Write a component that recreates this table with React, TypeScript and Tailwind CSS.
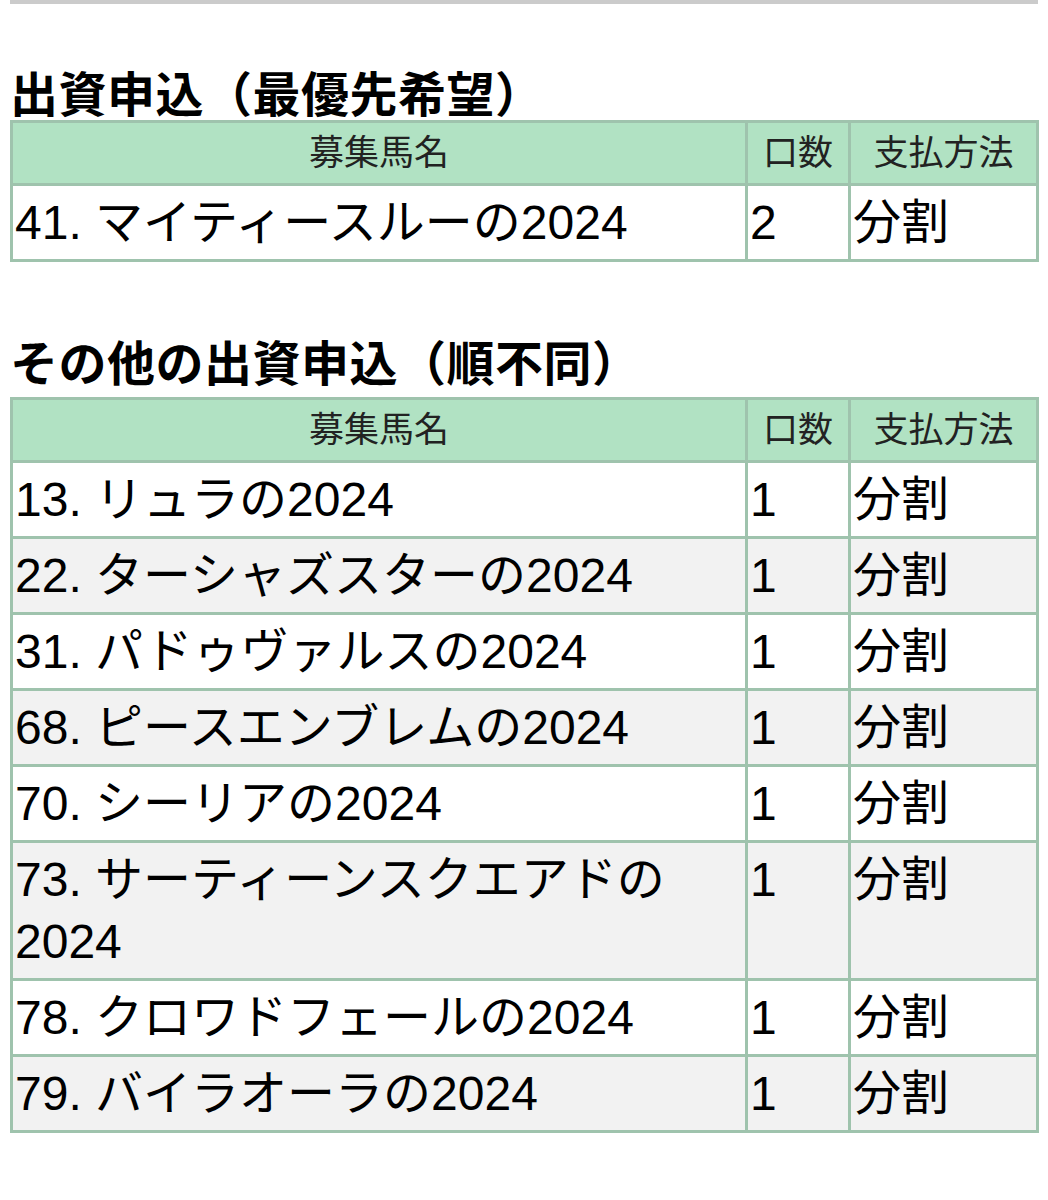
const first = [{ name: "41. マイティースルーの2024", qty: "2", pay: "分割" }];

const others = [
  { name: "13. リュラの2024", qty: "1", pay: "分割" },
  { name: "22. ターシャズスターの2024", qty: "1", pay: "分割" },
  { name: "31. パドゥヴァルスの2024", qty: "1", pay: "分割" },
  { name: "68. ピースエンブレムの2024", qty: "1", pay: "分割" },
  { name: "70. シーリアの2024", qty: "1", pay: "分割" },
  { name: "73. サーティーンスクエアドの2024", qty: "1", pay: "分割" },
  { name: "78. クロワドフェールの2024", qty: "1", pay: "分割" },
  { name: "79. バイラオーラの2024", qty: "1", pay: "分割" },
];

type Row = { name: string; qty: string; pay: string };

const th = "border-[3px] border-[#9fc3ad] bg-[#b1e2c3] text-center font-normal text-[35px] leading-[52px] py-[4px] text-[#222]";
const td = "border-[3px] border-[#9fc3ad] align-top text-[48px] leading-[62px] pt-[6px] pb-[5px] pl-[2px] pr-[4px] text-black";

function EntryTable({ rows }: { rows: Row[] }) {
  return (
    <table className="w-[1026px] table-fixed border-collapse">
      <colgroup>
        <col className="w-[735px]" />
        <col className="w-[103px]" />
        <col className="w-[188px]" />
      </colgroup>
      <thead>
        <tr>
          <th className={th}>募集馬名</th>
          <th className={th}>口数</th>
          <th className={th}>支払方法</th>
        </tr>
      </thead>
      <tbody>
        {rows.map((r, i) => (
          <tr key={r.name} className={i % 2 === 1 ? "bg-[#f2f2f2]" : "bg-white"}>
            <td className={td}>{r.name}</td>
            <td className={td}>{r.qty}</td>
            <td className={td}>{r.pay}</td>
          </tr>
        ))}
      </tbody>
    </table>
  );
}

export default function App() {
  return (
    <div
      className="min-h-[1200px] w-[1048px] bg-white px-[10px]"
      style={{ fontFamily: '"Liberation Sans", "Noto Sans CJK JP", sans-serif' }}
    >
      <div className="h-[4px] bg-[#cbcbcb]" />
      <h2 className="mt-[68px] text-[48px] font-bold leading-[48px] tracking-[0.5px] text-black">出資申込（最優先希望）</h2>
      <EntryTable rows={first} />
      <h2 className="mt-[79px] mb-[8px] text-[48px] font-bold leading-[48px] tracking-[0.5px] text-black">その他の出資申込（順不同）</h2>
      <EntryTable rows={others} />
    </div>
  );
}
